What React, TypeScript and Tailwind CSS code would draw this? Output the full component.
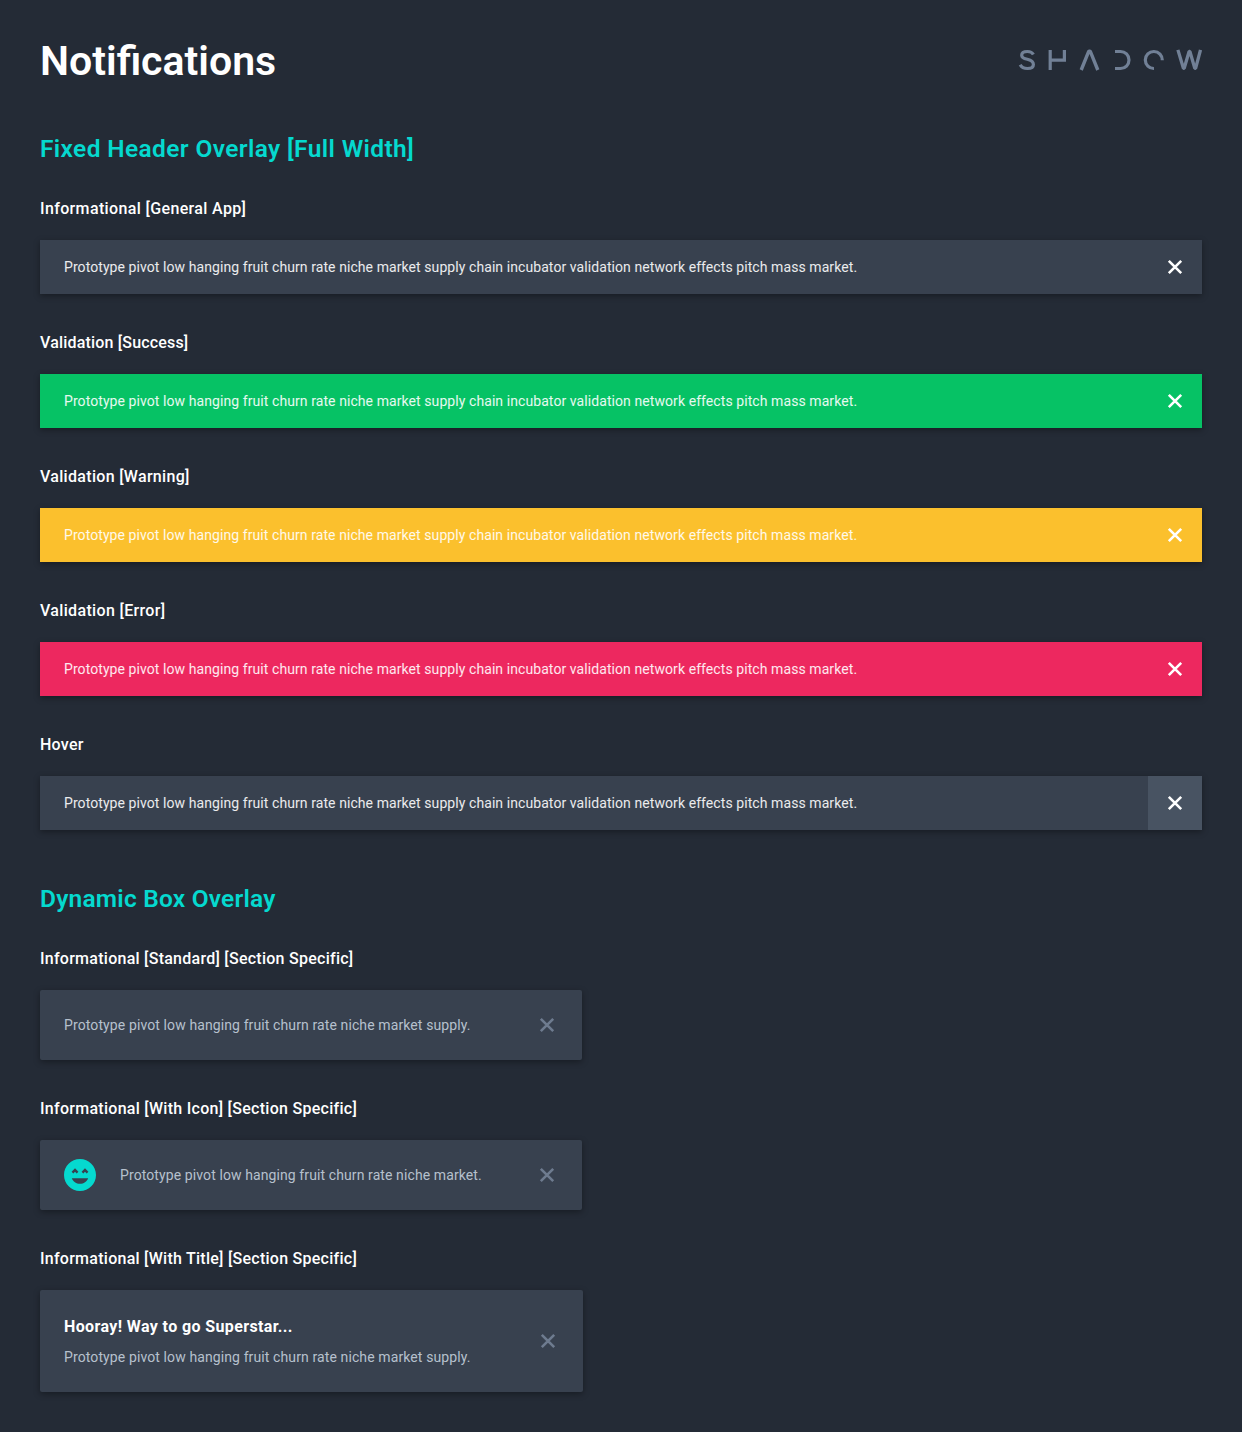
const LONG_MESSAGE =
  "Prototype pivot low hanging fruit churn rate niche market supply chain incubator validation network effects pitch mass market.";

function Logo() {
  return (
    <svg
      className="mt-[9px]"
      width="184"
      height="22"
      viewBox="0 0 184 22"
      fill="none"
      stroke="#718096"
      strokeWidth="3.2"
      strokeLinejoin="bevel"
      role="img"
      aria-label="Shadow"
    >
      <path d="M15.400 5.500C14.200 3.300 12.100 2.500 9.400 2.500C6 2.500 3.700 3.900 3.700 6.200C3.700 8.700 6 9.600 9.300 10.300C13 11.200 15.400 12.500 15.400 15.400C15.400 18 12.900 19.500 9.500 19.500C6.100 19.500 3.500 18.300 2.200 15.800" />
      <path d="M32.200 0.900V21M31.500 11.200H46.700M46.400 0.900V12.800" />
      <path d="M63.200 21L70.800 2.200H72.200L79.800 21" strokeWidth="3.400" />
      <path d="M97 2.500H102.500A8.500 8.500 0 0 1 102.500 19.500H97" />
      <path d="M136 19.500A8.500 8.500 0 1 1 144.300 11.300" />
      <path d="M159.900 0.900L165.400 19.300H166.200L171.100 2.500H171.900L176.800 19.300H177.600L182.500 0.900" strokeWidth="3.300" />
    </svg>
  );
}

function CloseIcon() {
  return (
    <svg width="16" height="16" viewBox="0 0 16 16" fill="none" stroke="currentColor" strokeWidth="2.6" aria-hidden="true">
      <path d="M1.800 1.800L14.200 14.200M14.200 1.800L1.800 14.200" />
    </svg>
  );
}

function LaughIcon() {
  return (
    <svg className="shrink-0 text-[#05d9cf]" width="32" height="32" viewBox="2 2 20 20" fill="currentColor" aria-hidden="true">
      <path d="M11.99 2C6.47 2 2 6.47 2 12s4.47 10 9.99 10S22 17.53 22 12 17.52 2 11.99 2zM8.88 7.82L11 9.94 9.94 11l-1.060-1.060L7.820 11 6.760 9.940l2.120-2.120zM12 17.500c-2.330 0-4.310-1.460-5.110-3.500h10.220c-.8 2.040-2.780 3.500-5.110 3.500zm4.180-6.500L15.120 9.940 14.060 11 13 9.940l2.120-2.120 2.120 2.120L16.180 11z" />
    </svg>
  );
}

type LabelProps = { label: string; tracking: string };

function Label({ label, tracking }: LabelProps) {
  return <h3 className={`h-8 text-base leading-[34px] font-medium whitespace-nowrap ${tracking}`}>{label}</h3>;
}

function Banner({ label, tracking, color, hover }: LabelProps & { color: string; hover?: boolean }) {
  return (
    <section className="flex flex-col gap-4">
      <Label label={label} tracking={tracking} />
      <div className={`flex h-[54px] items-center justify-between pl-6 shadow-[0_2px_6px_rgba(0,0,0,0.35)] ${color}`}>
        <p className="text-sm tracking-[0.078px] whitespace-nowrap text-white/90">{LONG_MESSAGE}</p>
        <button className={`flex size-[54px] items-center justify-center text-white ${hover ? "bg-[#485362]" : ""}`} aria-label="Close">
          <CloseIcon />
        </button>
      </div>
    </section>
  );
}

type BoxProps = LabelProps & {
  message: string;
  messageTracking: string;
  size: string;
  icon?: boolean;
  title?: string;
};

function Box({ label, tracking, message, messageTracking, size, icon, title }: BoxProps) {
  return (
    <section className="flex flex-col gap-4">
      <Label label={label} tracking={tracking} />
      <div className={`flex items-center gap-6 rounded-xs bg-[#38414f] pr-[27px] pl-6 shadow-[0_2px_6px_rgba(0,0,0,0.35)] ${size}`}>
        {icon && <LaughIcon />}
        <div className="flex flex-1 flex-col gap-2">
          {title && <h4 className="text-base leading-6 font-bold tracking-[0.38px]">{title}</h4>}
          <p className={`text-sm whitespace-nowrap text-[#b6c0cd] ${messageTracking}`}>{message}</p>
        </div>
        <button className="text-[#6e7b8f]" aria-label="Close">
          <CloseIcon />
        </button>
      </div>
    </section>
  );
}

export default function App() {
  return (
    <main className="min-h-[1432px] w-[1242px] bg-[#242b36] px-10 pt-10 font-['Roboto',sans-serif] text-white">
      <header className="flex h-[93px] items-start justify-between">
        <h1 className="text-[41px] leading-[42px] font-semibold">Notifications</h1>
        <Logo />
      </header>

      <h2 className="mb-[27px] text-[24.5px] leading-8 font-semibold tracking-[0.37px] text-[#05d9cf]">
        Fixed Header Overlay [Full Width]
      </h2>
      <div className="flex flex-col gap-8">
        <Banner label="Informational [General App]" tracking="tracking-[0.36px]" color="bg-[#38414f]" />
        <Banner label="Validation [Success]" tracking="tracking-[0.18px]" color="bg-[#06c265]" />
        <Banner label="Validation [Warning]" tracking="tracking-[0.31px]" color="bg-[#fbc02d]" />
        <Banner label="Validation [Error]" tracking="tracking-[0.34px]" color="bg-[#ed285f]" />
        <Banner label="Hover" tracking="tracking-[0.25px]" color="bg-[#38414f]" hover />
      </div>

      <h2 className="mt-[53px] mb-[27px] text-[24.5px] leading-8 font-semibold tracking-[0.21px] text-[#05d9cf]">
        Dynamic Box Overlay
      </h2>
      <div className="flex flex-col gap-8">
        <Box
          label="Informational [Standard] [Section Specific]"
          tracking="tracking-[0.26px]"
          message="Prototype pivot low hanging fruit churn rate niche market supply."
          messageTracking="tracking-[0.11px]"
          size="h-[70px] w-[542px]"
        />
        <Box
          label="Informational [With Icon] [Section Specific]"
          tracking="tracking-[0.28px]"
          message="Prototype pivot low hanging fruit churn rate niche market."
          messageTracking="tracking-[0.1px]"
          size="h-[70px] w-[542px]"
          icon
        />
        <Box
          label="Informational [With Title] [Section Specific]"
          tracking="tracking-[0.26px]"
          message="Prototype pivot low hanging fruit churn rate niche market supply."
          messageTracking="tracking-[0.11px]"
          size="h-[102px] w-[543px]"
          title="Hooray! Way to go Superstar..."
        />
      </div>
    </main>
  );
}
